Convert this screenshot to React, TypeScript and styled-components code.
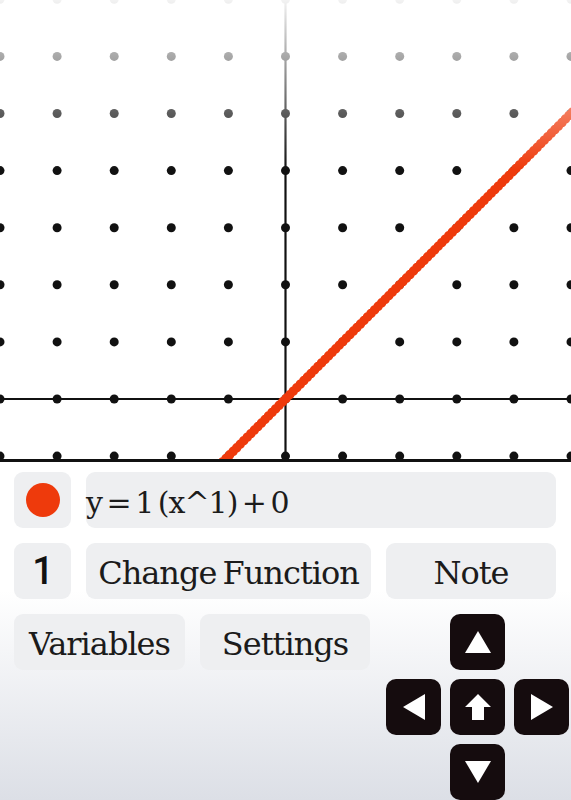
import React from "react";
import styled, { createGlobalStyle } from "styled-components";

const GlobalStyle = createGlobalStyle`
  html, body {
    margin: 0;
    padding: 0;
    background: #fff;
    overflow: hidden;
  }
  body {
    font-family: "DejaVu Serif", "Liberation Serif", serif;
    color: #1b1b1b;
  }
`;

const Screen = styled.div`
  width: 571px;
  height: 800px;
  display: flex;
  flex-direction: column;
  overflow: hidden;
`;

const GraphArea = styled.div`
  height: 459px;
  border-bottom: 3px solid #111;
  flex-shrink: 0;
`;

const Panel = styled.div`
  flex: 1;
  padding: 10px 15px 0 14px;
  display: flex;
  flex-direction: column;
  gap: 15px;
  background: linear-gradient(180deg, #ffffff 0%, #ffffff 38%, #dcdfe6 100%);
`;

const Row = styled.div`
  display: flex;
  gap: 15px;
  align-items: flex-start;
`;

const Key = styled.button<{ $w?: number; $grow?: boolean; $align?: string }>`
  height: 56px;
  width: ${(p) => (p.$w ? `${p.$w}px` : "auto")};
  flex: ${(p) => (p.$grow ? "1" : "none")};
  border: none;
  border-radius: 9px;
  background: #eeeff1;
  font-family: "DejaVu Serif", "Liberation Serif", serif;
  font-size: 32px;
  color: #1b1b1b;
  display: flex;
  align-items: center;
  justify-content: ${(p) => p.$align || "center"};
  padding: 4px 0 0;
  letter-spacing: -1px;
  word-spacing: -3px;
  white-space: nowrap;
`;

const Digit = styled.span`
  font-family: Roboto, "Noto Sans", sans-serif;
  font-weight: 500;
  font-size: 38px;
  color: #111;
  margin-top: -4px;
`;

const Swatch = styled.span`
  width: 34px;
  height: 34px;
  border-radius: 50%;
  background: #ee3a0c;
  margin-top: -4px;
`;

const Formula = styled.span`
  font-size: 30px;
  letter-spacing: -1px;
  word-spacing: -4px;
`;

const BottomRow = styled.div`
  display: flex;
  gap: 15px;
  align-items: flex-start;
`;

const Pad = styled.div`
  margin-left: 1px;
  display: grid;
  grid-template-columns: repeat(3, 55px);
  grid-template-rows: repeat(3, 56px);
  column-gap: 9px;
  row-gap: 9px;
`;

const PadKey = styled.button<{ $col: number; $row: number }>`
  grid-column: ${(p) => p.$col};
  grid-row: ${(p) => p.$row};
  border: none;
  border-radius: 10px;
  background: #150c0e;
  display: flex;
  align-items: center;
  justify-content: center;
  padding: 0;
`;

const GRID = 571 / 10;
const OX = 285.5;
const OY = 399;

function Graph() {
  const dots: JSX.Element[] = [];
  for (let r = -1; r <= 7; r++) {
    const y = OY - GRID * r;
    for (let c = -5; c <= 5; c++) {
      const x = OX + GRID * c;
      dots.push(<circle key={`${r}-${c}`} cx={x} cy={y} r={4.5} fill="#111" />);
    }
  }
  return (
    <svg width="571" height="459" viewBox="0 0 571 459" style={{ display: "block" }}>
      <defs>
        <linearGradient id="fade" x1="0" y1="0" x2="0" y2="1">
          <stop offset="0" stopColor="#fff" stopOpacity="0.95" />
          <stop offset="0.37" stopColor="#fff" stopOpacity="0" />
        </linearGradient>
      </defs>
      <rect width="571" height="459" fill="#fff" />
      <line x1="0" y1={OY} x2="571" y2={OY} stroke="#111" strokeWidth="2.2" />
      <line x1={OX} y1="0" x2={OX} y2="459" stroke="#111" strokeWidth="2.2" />
      {dots}
      <line x1={OX - 70} y1={OY + 70} x2={OX + 300} y2={OY - 300} stroke="#ee3a0c" strokeWidth="7.5" />
      <line
        x1={OX - 70}
        y1={OY + 70}
        x2={OX + 300}
        y2={OY - 300}
        stroke="#ee3a0c"
        strokeWidth="9.5"
        strokeLinecap="round"
        strokeDasharray="0 5"
      />
      <rect width="571" height="459" fill="url(#fade)" />
    </svg>
  );
}

export default function App() {
  return (
    <Screen>
      <GlobalStyle />
      <GraphArea>
        <Graph />
      </GraphArea>
      <Panel>
        <Row>
          <Key $w={57}>
            <Swatch />
          </Key>
          <Key $grow $align="flex-start">
            <Formula>y = 1 (x^1) + 0</Formula>
          </Key>
        </Row>
        <Row>
          <Key $w={57}>
            <Digit>1</Digit>
          </Key>
          <Key $w={285}>Change Function</Key>
          <Key $w={170}>Note</Key>
        </Row>
        <BottomRow>
          <Key $w={171}>Variables</Key>
          <Key $w={170}>Settings</Key>
          <Pad>
            <PadKey $col={2} $row={1}>
              <svg width="26" height="22" viewBox="0 0 26 22">
                <polygon points="13,0 26,22 0,22" fill="#fff" />
              </svg>
            </PadKey>
            <PadKey $col={1} $row={2}>
              <svg width="22" height="26" viewBox="0 0 22 26">
                <polygon points="0,13 22,0 22,26" fill="#fff" />
              </svg>
            </PadKey>
            <PadKey $col={2} $row={2}>
              <svg width="26" height="26" viewBox="0 0 26 26">
                <polygon points="13,0 26,13 19,13 19,26 7,26 7,13 0,13" fill="#fff" />
              </svg>
            </PadKey>
            <PadKey $col={3} $row={2}>
              <svg width="22" height="26" viewBox="0 0 22 26">
                <polygon points="22,13 0,0 0,26" fill="#fff" />
              </svg>
            </PadKey>
            <PadKey $col={2} $row={3}>
              <svg width="26" height="22" viewBox="0 0 26 22">
                <polygon points="13,22 26,0 0,0" fill="#fff" />
              </svg>
            </PadKey>
          </Pad>
        </BottomRow>
      </Panel>
    </Screen>
  );
}
